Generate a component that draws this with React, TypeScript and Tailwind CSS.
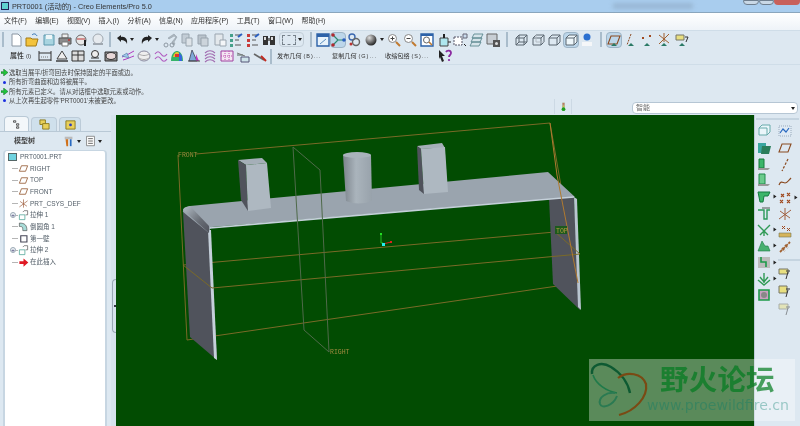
import React from 'react';

const cjk = { fontFamily: '"Liberation Sans", "Noto Sans CJK SC", sans-serif' };

const Ico: React.FC<{ children: React.ReactNode; className?: string }> = ({ children, className = '' }) => (
  <svg viewBox="0 0 16 16" className={`w-[16px] h-[16px] shrink-0 ${className}`}>
    {children}
  </svg>
);

const Arrow = () => <span className="block w-0 h-0 shrink-0 border-x-[2px] border-x-transparent border-t-[3px] border-t-[#222]" />;
const Sep = () => <span className="block w-[2px] h-[15px] shrink-0 bg-[#a9bccb]" />;

const plane = (s = '#8a4a20') => <path d="M5 4h9l-3 8H2z" fill="none" stroke={s} strokeWidth="1.1" />;
const ground = <path d="M8 11l3 3H5z" fill="#2b7a66" />;
const cube = (fill = 'none') => (
  <>
    <path d="M3 6l3-3h8v7l-3 3H3z" fill={fill} stroke="#5b6670" />
    <path d="M3 6h8v7M11 6l3-3" fill="none" stroke="#5b6670" />
  </>
);

const row1a = [
  <><path d="M4 2h6l3 3v9H4z" fill="#fff" stroke="#8a96a2" /></>,
  <><path d="M2 6h5l1 1h6l-2 7H2z" fill="#f3c33b" stroke="#a37a14" /><path d="M8 3c2-2 4-1 5 1" fill="none" stroke="#2a6db0" /></>,
  <><path d="M3 3h10v10H3z" fill="#a8d4e0" stroke="#5d98ad" /><path d="M5 3h6v4H5z" fill="#eef6f8" /></>,
  <><path d="M5 2h6v4H5z" fill="#eee" stroke="#777" /><path d="M2 6h12v6H2z" fill="#8b8b8b" stroke="#555" /><path d="M5 10h6v4H5z" fill="#fff" stroke="#777" /><circle cx="12" cy="8" r="1" fill="#b33" /></>,
  <><circle cx="7" cy="8" r="5" fill="#e8e8e8" stroke="#666" /><path d="M3 7h8" stroke="#b33" /><path d="M11 8v6" stroke="#222" strokeWidth="2" /></>,
  <><circle cx="8" cy="7" r="5" fill="#e6eaee" stroke="#a0a8b0" /><path d="M3 12h10" stroke="#a0a8b0" strokeWidth="2" /></>,
];

const row1b = [
  <><path d="M12 2l-6 4 1 1 5-3 2 1-4 5 1 3 2-1-1-2 3-5z" fill="#aeb8c0" stroke="#8d98a2" strokeWidth=".5" /><circle cx="4" cy="13" r="2" fill="none" stroke="#8d98a2" /><circle cx="10" cy="13" r="2" fill="none" stroke="#8d98a2" /></>,
  <><path d="M3 2h7v9H3z" fill="#c3cdd6" stroke="#99a5af" /><path d="M7 6h6v8H7z" fill="#dde3e8" stroke="#99a5af" /></>,
  <><path d="M3 3h8v9H3z" fill="#b9c3cc" stroke="#98a3ad" /><path d="M6 6h7v8H6z" fill="#ccd4db" stroke="#98a3ad" /></>,
  <><path d="M3 2h8v11H3z" fill="#e3e8ec" stroke="#9aa5af" /><path d="M8 8h6v6H8z" fill="#f4f6f8" stroke="#9aa5af" /></>,
  <><path d="M2 2h3v3H2zM2 7h3v3H2zM2 12h3v3H2z" fill="#45a08a" /><path d="M7 3h6M7 8h4M7 13h6" stroke="#555" /><path d="M10 5l4-3" stroke="#2a5fc0" strokeWidth="2" /></>,
  <><path d="M2 2h3v3H2zM2 7h3v3H2zM2 12h3v3H2z" fill="#c83a3a" /><path d="M7 3h6M7 8h4M7 13h6" stroke="#555" /><path d="M10 5l4-3" stroke="#2a5fc0" strokeWidth="2" /></>,
  <><path d="M2 4h5v9H2zM9 4h5v9H9z" fill="#333" /><path d="M7 6h2v3H7z" fill="#777" /><path d="M3 5h2v3H3zM10 5h2v3h-2z" fill="#ddd" /></>,
];

const row1c = [
  <><path d="M2 2h12v12H2z" fill="#e8f3fb" stroke="#2d62a8" strokeWidth="1.4" /><path d="M2 2h12v3H2z" fill="#2d62a8" /><path d="M5 12l6-5" stroke="#5d8fc0" /></>,
  <><path d="M3 3l5 5-5 5M8 8h6" fill="none" stroke="#2d8a70" strokeWidth="1.2" /><circle cx="3" cy="3" r="1.8" fill="#b02a30" /><circle cx="3" cy="13" r="1.8" fill="#b02a30" /><circle cx="14" cy="8" r="1.8" fill="#2b5fc0" /></>,
  <><circle cx="6" cy="5" r="3" fill="none" stroke="#3a67b0" strokeWidth="1.4" /><circle cx="10" cy="10" r="3.5" fill="none" stroke="#666" strokeWidth="1.4" /><circle cx="5" cy="12" r="1.5" fill="#b33" /></>,
  <><defs><radialGradient id="ball" cx=".35" cy=".3" r=".8"><stop offset="0" stopColor="#ddd" /><stop offset="1" stopColor="#111" /></radialGradient></defs><circle cx="8" cy="8" r="5.5" fill="url(#ball)" /></>,
];

const zoomIn = <><circle cx="6.5" cy="6.5" r="4" fill="#fff" stroke="#888" /><path d="M4.5 6.5h4M6.5 4.5v4" stroke="#444" /><path d="M10 10l4 4" stroke="#c07a30" strokeWidth="2" /></>;
const zoomOut = <><circle cx="6.5" cy="6.5" r="4" fill="#fff" stroke="#888" /><path d="M4.5 6.5h4" stroke="#444" /><path d="M10 10l4 4" stroke="#c07a30" strokeWidth="2" /></>;
const row1d = [
  zoomIn,
  zoomOut,
  <><path d="M2 2h12v12H2z" fill="#fff" stroke="#2d62a8" strokeWidth="1.4" /><path d="M2 2h12v2H2z" fill="#2d62a8" /><circle cx="7.5" cy="8" r="3" fill="none" stroke="#666" /><path d="M10 10l3 3" stroke="#c07a30" strokeWidth="1.6" /></>,
  <><path d="M4 6h8v8H4z" fill="#aee6ee" stroke="#444" /><path d="M8 6V2" stroke="#222" strokeWidth="2" /><path d="M12 10h3" stroke="#222" /></>,
  <><path d="M2 5h8v8H2z" fill="#fff" stroke="#556" strokeDasharray="2 1" /><path d="M11 2h4v4h-4z" fill="#cde" stroke="#667" /><path d="M12 12l2 2" stroke="#222" /></>,
  <><path d="M5 2h9l-2 4H3zM4 6h9l-2 4H2zM3 10h9l-2 4H1z" fill="#d6e4ea" stroke="#4f7d86" strokeWidth=".8" /></>,
  <><path d="M2 2h10v10H2z" fill="#c8ced4" stroke="#666" /><path d="M8 8h7v7H8z" fill="#555" /><circle cx="11.5" cy="11.5" r="1.5" fill="#ddd" /></>,
];

const row1e = [
  <>{cube()}<path d="M6 3v7h8M6 10l-3 3" fill="none" stroke="#5b6670" /></>,
  <>{cube()}<path d="M6 3v7h8" fill="none" stroke="#b4bcc4" /></>,
  <>{cube()}</>,
];

const row2 = [
  <><path d="M2 3v10M14 3v10M2 5h12M2 12h12" fill="none" stroke="#333" /><path d="M4 9h8" stroke="#777" strokeDasharray="1 1" /></>,
  <><path d="M3 11l5-8 5 8z" fill="#eee" stroke="#444" /><path d="M2 13h12" stroke="#333" strokeWidth="1.4" /></>,
  <><path d="M2 3h12v10H2z" fill="#ddd" stroke="#333" /><path d="M2 7h12M8 3v10" stroke="#333" /></>,
  <><circle cx="8" cy="6" r="3.5" fill="#eee" stroke="#333" /><path d="M2 13h12M4 10h8" stroke="#333" strokeWidth="1.2" /></>,
  <><path d="M2 4h12v9H2z" fill="#888" stroke="#333" /><ellipse cx="8" cy="8" rx="5" ry="3.5" fill="#e8d8d8" stroke="#333" /></>,
  <><path d="M2 9c4-1 8-4 12-6M3 12c4-1 8-3 11-4" fill="none" stroke="#b03ac0" /><path d="M2 8l5-3 2 5z" fill="#9dc8e8" stroke="#5377a8" strokeWidth=".6" /></>,
  <><ellipse cx="8" cy="8" rx="6" ry="5" fill="#eee" stroke="#8a8aa0" /><path d="M3 6c3 2 7 2 10 0M3 10c3 2 7 2 10 0" fill="none" stroke="#aaa" /></>,
  <><path d="M2 6c2-3 4-3 6 0s4 3 6 0M2 11c2-3 4-3 6 0s4 3 6 0" fill="none" stroke="#b05ac0" strokeWidth="1.2" /></>,
  <><path d="M2 13c0-8 4-10 6-10s6 2 6 10z" fill="#36b36a" /><path d="M4 9c1-4 3-5 4-5s3 1 4 5z" fill="#e8c22a" /><path d="M6 6h4v3H6z" fill="#d33" /><path d="M10 4l3 4v5h-3z" fill="#3366dd" /></>,
  <><path d="M6 2l5 11H3z" fill="#7fa8d8" stroke="#334" strokeWidth=".7" /><path d="M10 6l3 7h-3z" fill="#c03ac0" /><path d="M2 13h12" stroke="#444" /></>,
  <><path d="M3 5c3-3 7-3 10 0M3 8c3-3 7-3 10 0M3 11c3-3 7-3 10 0M3 14c3-3 7-3 10 0" fill="none" stroke="#a06ab0" strokeWidth="1.1" /></>,
  <><path d="M2 3h12v10H2z" fill="#f3e6f2" stroke="#a040a0" /><path d="M2 8h12M6 3v10M10 3v10" stroke="#c050b0" strokeDasharray="1 1" /></>,
  <><path d="M2 6h6v2H2z" fill="#9aa" /><path d="M6 9h8v5H6z" fill="#cfe4ea" stroke="#557" /><path d="M2 5l8 3" stroke="#777" /></>,
  <><path d="M2 6l10 6" stroke="#666" strokeWidth="1.6" /><path d="M9 8l5 5" stroke="#c02a20" strokeWidth="2" /></>,
];

const right1 = [
  [<><path d="M6 2h8v7l-3 3H3V5z" fill="#eaf6fa" stroke="#6aa" /><path d="M3 5h8v7" fill="none" stroke="#6aa" /></>, 131, false],
  [<><path d="M2 3h8v10H2z" fill="#3aa6a0" /><path d="M6 6h9l-2 8H5z" fill="#2a7d5a" /></>, 148, false],
  [<><path d="M3 3h5v9H3z" fill="#3bb56a" stroke="#167a3a" /><path d="M2 12h12l-2 2H2z" fill="#999" /></>, 165, false],
  [<><path d="M3 2h6v10H3z" fill="#6acb8c" stroke="#1e8a4a" /><path d="M2 12h12l-2 2H2z" fill="#999" /></>, 182, false],
  [<><path d="M2 3h12l-2 4H8l-1 6H4z" fill="#3bb56a" stroke="#147a40" /></>, 197, true],
  [<><path d="M2 5h6v9h3V5h3" fill="none" stroke="#2a9a5a" strokeWidth="1.4" /><path d="M6 3h8" stroke="#555" /></>, 213, false],
  [<><path d="M2 3l6 6 6-6M8 9v5M4 13l4-4 4 4" fill="none" stroke="#2f9a55" strokeWidth="1.4" /></>, 230, true],
  [<><path d="M2 13h12l-2-5H9L6 3 4 8z" fill="#48b070" stroke="#1d7a45" strokeWidth=".6" /></>, 247, true],
  [<><path d="M2 3h12v11H2z" fill="#bbb" /><path d="M5 3v5h5v5" fill="none" stroke="#1d9a4a" strokeWidth="1.6" /></>, 263, true],
  [<><path d="M8 2v10M4 6l4 5 4-5M2 9l6 5 6-5" fill="none" stroke="#2f9a55" strokeWidth="1.4" /></>, 280, true],
  [<><path d="M3 3h10v10H3z" fill="#c8a0c0" stroke="#1d9a4a" strokeWidth="1.6" /><circle cx="8" cy="8" r="3" fill="#888" /></>, 295, false],
] as const;

const right2: { icon: React.ReactNode; gap: string }[] = [
  { icon: <><path d="M2 3h12v10H2z" fill="#dfeaf4" stroke="#9ab" strokeDasharray="1 1" /><path d="M3 10l3-4 3 3 3-4" fill="none" stroke="#2a6ac0" strokeWidth="1.2" /></>, gap: 'mt-0' },
  { icon: plane(), gap: 'mt-[1px]' },
  { icon: <path d="M11 2L5 14" stroke="#8a4a20" strokeWidth="1.2" strokeDasharray="2.5 1.5" />, gap: 'mt-[1px]' },
  { icon: <path d="M2 11c2-5 4-2 6-2s4-3 6-5" fill="none" stroke="#8a4a20" strokeWidth="1.2" />, gap: 'mt-0' },
  { icon: <path d="M4 4l3 3M7 4L4 7M10 3l3 3M13 3l-3 3M3 10l3 3M6 10l-3 3M10 10l3 3M13 10l-3 3" stroke="#a04a20" strokeWidth="1.1" />, gap: 'mt-0' },
  { icon: <path d="M8 2v12M2 13L14 4M3 5l10 7" stroke="#a06040" strokeWidth="1" />, gap: 'mt-0' },
  { icon: <><path d="M2 10h12v4H2z" fill="#d6b45a" stroke="#775" strokeWidth=".6" /><path d="M5 3l3 3M8 3L5 6M10 5l3 3M13 5l-3 3" stroke="#a04a20" /></>, gap: 'mt-[1px]' },
  { icon: <path d="M3 13l10-10M5 9l3 3M8 6l3 3" stroke="#a06030" strokeWidth="1.8" strokeDasharray="3 1" />, gap: 'mt-0' },
];

const datumIcon = (d: string) => (
  <>
    <path d={d} fill="#e8df80" stroke="#776" />
    <path d="M11 7L9 14" stroke="#333" />
    <path d="M9 6h4" stroke="#333" />
  </>
);

const TreeLine: React.FC<{ label: string; plus?: boolean; icon: React.ReactNode }> = ({ label, plus, icon }) => (
  <div className="flex items-center h-[11.7px] pl-[5px]">
    {plus ? (
      <span className="w-[6px] h-[6px] shrink-0 rounded-sm border border-[#9aa8b4] bg-[#eef3f7] text-[6px] leading-[4px] text-center text-[#336]">+</span>
    ) : (
      <span className="w-[6px] h-px ml-[1px] shrink-0" />
    )}
    <span className={`h-px bg-[#b5b5b5] shrink-0 ${plus ? 'w-[2px]' : 'w-[1px] -ml-[5px] pl-[6px]'}`} />
    <svg viewBox="0 0 16 16" className="w-[11px] h-[11px] shrink-0">{icon}</svg>
    <span className="ml-[1px] text-[6.5px] text-[#55606a] whitespace-nowrap">{label}</span>
  </div>
);

const App: React.FC = () => {
  return (
    <div className="relative w-[800px] h-[426px] overflow-hidden flex flex-col bg-[#dde8f1] blur-[0.35px]" style={cjk}>
      {/* title bar */}
      <div className="h-[13px] shrink-0 bg-[#a9cdee] border-b border-[#8aa6bd] flex items-center pl-[1px]">
        <span className="w-[8px] h-[8px] bg-[#5fd0d0] border border-[#225] shrink-0" />
        <span className="ml-[3px] text-[7.3px] leading-[9px] text-[#333] whitespace-nowrap">PRT0001 (活动的) - Creo Elements/Pro 5.0</span>
        <div className="ml-auto flex self-start items-start">
          <span className="w-[80px] h-[6px] mt-[3px] mr-[50px] bg-[#8fa9c4] opacity-60 blur-[2px]" />
          <span className="w-[16px] h-[5px] bg-[#c9d8e6] border border-[#6f7f8f] rounded-b-sm" />
          <span className="w-[15px] h-[5px] bg-[#c9d8e6] border border-[#6f7f8f] rounded-b-sm" />
          <span className="w-[26px] h-[5px] bg-[#c8605a] rounded-b-sm" />
        </div>
      </div>

      {/* menu bar */}
      <div className="h-[17px] shrink-0 bg-gradient-to-b from-[#ffffff] to-[#eef3f8] flex items-center gap-[8.3px] pl-[4px] text-[7px] text-[#333] whitespace-nowrap">
        {['文件(F)', '编辑(E)', '视图(V)', '插入(I)', '分析(A)', '信息(N)', '应用程序(P)', '工具(T)', '窗口(W)', '帮助(H)'].map((m) => (
          <span key={m}>{m}</span>
        ))}
      </div>

      {/* toolbar row 1 */}
      <div className="h-[18px] shrink-0 flex items-center border-t border-[#cfdde8] pl-[2px]">
        <Sep />
        <div className="flex ml-[4px]">
          {row1a.map((ic, i) => <Ico key={i} className="mr-[0.4px]">{ic}</Ico>)}
        </div>
        <span className="ml-[3px]"><Sep /></span>
        <Ico className="ml-[3px]"><path d="M3 6l4-3v2c4-1 7 2 6 7-1-3-3-4-6-4v2z" fill="#222" /></Ico>
        <Arrow />
        <Ico className="ml-[5px] -scale-x-100"><path d="M3 6l4-3v2c4-1 7 2 6 7-1-3-3-4-6-4v2z" fill="#222" /></Ico>
        <Arrow />
        <div className="flex ml-[3px]">
          {row1b.map((ic, i) => <Ico key={i} className="mr-[0.5px]">{ic}</Ico>)}
        </div>
        <div className="ml-[1px] w-[25px] h-[15px] flex items-center border border-[#c2ced8] rounded-sm">
          <span className="ml-[2px] w-[14px] h-[10px] border border-dashed border-[#77828c]" />
          <span className="ml-auto mr-[1px]"><Arrow /></span>
        </div>
        <span className="ml-[6px]"><Sep /></span>
        <Ico className="ml-[3px]">{row1c[0]}</Ico>
        <span className="bg-[#bcd6ea] border border-[#9db4c6] rounded-sm ml-[-1px] w-[16px] h-[16px] flex shrink-0 items-center justify-center">
          <Ico>{row1c[1]}</Ico>
        </span>
        <Ico className="ml-[0.5px]">{row1c[2]}</Ico>
        <Ico className="ml-[0.5px]">{row1c[3]}</Ico>
        <span className="ml-[1px]"><Arrow /></span>
        <div className="flex ml-[2px]">
          {row1d.map((ic, i) => <Ico key={i} className="mr-[0.6px]">{ic}</Ico>)}
        </div>
        <span className="ml-[4px]"><Sep /></span>
        <div className="flex ml-[5px]">
          {row1e.map((ic, i) => <Ico key={i} className="mr-[0.5px]">{ic}</Ico>)}
        </div>
        <span className="bg-[#bcd6ea] border border-[#9db4c6] rounded-sm w-[16px] h-[16px] flex shrink-0 items-center justify-center">
          <Ico>{cube('#eef7fb')}</Ico>
        </span>
        <Ico className="ml-[0.5px]"><circle cx="8" cy="5" r="3.5" fill="#2a6fd0" /><path d="M3 10h10v4H3z" fill="#f5f7f9" /></Ico>
        <span className="ml-[5px]"><Sep /></span>
        <span className="ml-[4px] bg-[#bcd6ea] border border-[#9db4c6] rounded-sm w-[16px] h-[16px] flex shrink-0 items-center justify-center">
          <Ico>{plane()}{ground}</Ico>
        </span>
        <Ico className="ml-[0.5px]"><path d="M8 2L4 13" stroke="#8a4a20" strokeDasharray="2 1" />{ground}</Ico>
        <Ico className="ml-[0.5px]"><path d="M3 5l2 2M5 5L3 7M10 3l2 2M12 3l-2 2" stroke="#a04a20" />{ground}</Ico>
        <Ico className="ml-[0.5px]"><path d="M3 3l10 8M13 2L3 12M8 1v9" stroke="#a06030" />{ground}</Ico>
        <Ico className="ml-[2px]"><path d="M2 3h8v5H2z" fill="#e8df80" stroke="#776" /><path d="M11 5h3l-2 5" fill="none" stroke="#333" />{ground}</Ico>
      </div>

      {/* toolbar row 2 */}
      <div className="h-[17px] shrink-0 flex items-center pl-[10px] border-b border-[#cfdde8] text-[#333] whitespace-nowrap">
        <span className="w-[25px] text-[7px] font-medium">属性 <span className="text-[5.5px]">(I)</span></span>
        <div className="flex ml-[2px]">
          {row2.map((ic, i) => <Ico key={i} className="mr-[0.5px]">{ic}</Ico>)}
        </div>
        <span className="ml-[2px]"><Sep /></span>
        <div className="ml-[5px] flex gap-[5px] text-[6.2px]">
          <span className="w-[50px]">发布几何 <span className="text-[5.5px] tracking-[1px]">(B)...</span></span>
          <span className="w-[48px]">复制几何 <span className="text-[5.5px] tracking-[1px]">(G)...</span></span>
          <span className="w-[49px]">收缩包络 <span className="text-[5.5px] tracking-[1px]">(S)...</span></span>
        </div>
        <Ico className="ml-[3px]">
          <path d="M2 2l6 6H5l2 5-2 1-2-5-1 2z" fill="#222" />
          <path d="M9 4c1-2 5-2 5 1 0 2-2 2-2 4" fill="none" stroke="#8a2aa0" strokeWidth="1.8" />
          <circle cx="12" cy="12" r="1.1" fill="#8a2aa0" />
        </Ico>
      </div>

      {/* message area */}
      <div className="h-[50px] shrink-0 flex">
        <div className="pl-[1px] pt-[3px] text-[6.3px] text-[#444] flex-1">
          {[
            ['g', '选取当展平/折弯回去时保持固定的平面或边。'],
            ['b', '所有折弯曲面和边将被展平。'],
            ['g', '所有元素已定义。请从对话框中选取元素或动作。'],
            ['b', "从上次再生起零件'PRT0001'未被更改。"],
          ].map(([k, t]) => (
            <div key={t} className="flex items-center h-[9.4px] whitespace-nowrap">
              <span className="w-[7px] flex justify-center shrink-0">
                {k === 'g' ? (
                  <svg viewBox="0 0 8 8" className="w-[7px] h-[7px]"><path d="M0 3h3V0l5 4-5 4V5H0z" fill="#1fc43a" stroke="#0b5a1a" strokeWidth=".5" /></svg>
                ) : (
                  <span className="w-[3px] h-[3px] rounded-full bg-[#1a2ee0]" />
                )}
              </span>
              <span className="ml-[1px]">{t}</span>
            </div>
          ))}
        </div>
        <div className="flex items-end pb-[1px]">
          <div className="w-[18px] h-[15px] border-x border-[#ccd9e4] flex items-center justify-center">
            <svg viewBox="0 0 8 14" className="w-[5px] h-[12px]">
              <path d="M2 0h4v8H2z" fill="#a8a87a" />
              <circle cx="4" cy="2" r="1.3" fill="#c86a6a" />
              <circle cx="4" cy="6" r="1.3" fill="#d8c050" />
              <circle cx="4" cy="10.5" r="3" fill="#1fa01f" />
            </svg>
          </div>
          <div className="ml-[60px] mr-[2px] w-[166px] h-[12px] bg-white border border-[#b6c6d4] rounded-sm flex items-center pl-[3px] text-[7px] text-[#666]">
            智能
            <span className="ml-auto mr-[2px]"><Arrow /></span>
          </div>
        </div>
      </div>

      {/* body */}
      <div className="flex-1 flex min-h-0">
        {/* model tree panel */}
        <div className="w-[111px] shrink-0 flex flex-col">
          <div className="h-[16px] shrink-0 flex items-end pl-[4px] gap-[2px]">
            <span className="w-[25px] h-[15px] bg-[#f3f7fa] border border-b-0 border-[#b9c9d6] rounded-t flex items-center justify-center">
              <svg viewBox="0 0 12 12" className="w-[9px] h-[9px]"><path d="M2 1h3v2H2zM6 5h3v2H6zM6 9h3v2H6z" fill="none" stroke="#333" /></svg>
            </span>
            <span className="w-[26px] h-[14px] bg-[#cfe0ec] border border-b-0 border-[#bccbd8] rounded-t flex items-center justify-center">
              <svg viewBox="0 0 12 12" className="w-[11px] h-[11px]"><path d="M1 1h6v5H1z" fill="#e8d05a" stroke="#8a7a20" /><path d="M4 5h7v6H4z" fill="#e8d05a" stroke="#8a7a20" /></svg>
            </span>
            <span className="w-[22px] h-[14px] bg-[#cfe0ec] border border-b-0 border-[#bccbd8] rounded-t flex items-center justify-center">
              <svg viewBox="0 0 12 12" className="w-[11px] h-[11px]"><path d="M1 2h10v9H1z" fill="#e8d05a" stroke="#8a7a20" /><circle cx="6" cy="6.5" r="1.5" fill="#2a3ac0" /></svg>
            </span>
          </div>
          <div className="h-[19px] shrink-0 flex items-center border-t border-[#b9c9d6]">
            <span className="ml-[14px] w-[24px] text-[7px] font-bold text-[#444] whitespace-nowrap">模型树</span>
            <svg viewBox="0 0 14 14" className="ml-[25px] w-[12px] h-[12px]"><path d="M2 2h9v3H2z" fill="#bbb" /><path d="M3 5l1 8h2V5z" fill="#d0701a" /><path d="M9 5v8" stroke="#2a6ac0" strokeWidth="2" /></svg>
            <span className="ml-[2px]"><Arrow /></span>
            <svg viewBox="0 0 14 14" className="ml-[4px] w-[11px] h-[12px]"><path d="M2 1h10v12H2z" fill="#fff" stroke="#777" /><path d="M4 4h6M4 7h6M4 10h6" stroke="#444" /></svg>
            <span className="ml-[2px]"><Arrow /></span>
          </div>
          <div className="flex-1 ml-[3px] mr-[4px] bg-white border-x-2 border-t border-[#c7d6e2] rounded-t-sm">
            <div className="flex items-center h-[11.7px] pl-[3px]">
              <span className="w-[9px] h-[8px] bg-[#6fd3e0] border border-[#566] shrink-0" />
              <span className="ml-[3px] text-[6.5px] text-[#55606a]">PRT0001.PRT</span>
            </div>
            <TreeLine label="RIGHT" icon={plane()} />
            <TreeLine label="TOP" icon={plane()} />
            <TreeLine label="FRONT" icon={plane()} />
            <TreeLine label="PRT_CSYS_DEF" icon={<path d="M8 2v12M2 13L14 4M3 5l10 7" stroke="#a06040" />} />
            <TreeLine plus label="拉伸 1" icon={<><path d="M2 7h8v7H2z" fill="#fff" stroke="#3a9a8a" /><path d="M7 3l2-2h5v6h-3" fill="none" stroke="#555" /></>} />
            <TreeLine label="倒圆角 1" icon={<><path d="M2 3c8 0 11 3 11 11H7C7 8 6 8 2 8z" fill="#a8dcd8" stroke="#555" /></>} />
            <TreeLine label="第一壁" icon={<path d="M4 4h9v9H4z" fill="#fff" stroke="#445" strokeWidth="1.6" />} />
            <TreeLine plus label="拉伸 2" icon={<><path d="M2 7h8v7H2z" fill="#fff" stroke="#3a9a8a" /><path d="M7 3l2-2h5v6h-3" fill="none" stroke="#555" /></>} />
            <TreeLine label="在此插入" icon={<path d="M2 6h6V2l7 6-7 6v-4H2z" fill="#e01a24" />} />
          </div>
        </div>

        {/* sash */}
        <div className="w-[5px] shrink-0 flex flex-col items-start pt-[164px] bg-[#d6e3ed]">
          <div className="w-[4px] h-[54px] ml-[1px] border border-r-0 border-[#9aa8b6] rounded-l-sm flex items-center justify-center">
            <span className="w-[2px] h-[2px] bg-[#334]" />
          </div>
        </div>

        {/* graphics window */}
        <div className="flex-1 bg-[#024c02]">
          <svg viewBox="116 115 638 311" className="w-full h-full block">
            <defs>
              <linearGradient id="cyl" x1="0" x2="1" y1="0" y2="0">
                <stop offset="0" stopColor="#7c848c" />
                <stop offset=".45" stopColor="#aab4bc" />
                <stop offset="1" stopColor="#98a2ab" />
              </linearGradient>
              <linearGradient id="bend" x1="0" x2="1" y1="0" y2="1">
                <stop offset="0" stopColor="#b5bfc8" />
                <stop offset=".6" stopColor="#676c74" />
                <stop offset="1" stopColor="#50535c" />
              </linearGradient>
            </defs>

            {/* back half of datum planes */}
            <g fill="none" stroke="#7a6a28" strokeWidth="1">
              <path d="M196 154L550 123L578 283" />
              <path d="M178 155L187 340L578 283" />
              <path d="M183 265L555 232" />
            </g>

            {/* left wall */}
            <path d="M183 212L210 230L217 360L190 337Z" fill="#50535c" />
            <path d="M208 230L211 230L217 360L214 358Z" fill="#c5d0da" />
            {/* right wall */}
            <path d="M549 198L574 197L580 310L553 284Z" fill="#50535c" />
            <path d="M574 197L577 199L581 310L578 307Z" fill="#b9c5d0" />

            {/* top flange */}
            <path d="M190 206L548 172L575 197L212 227Q209 229 209 233L183 212Q182 208 190 206Z" fill="#9aa4ae" />
            <path d="M183 210Q183 207 190 206L209 226L209 233Z" fill="url(#bend)" />
            <path d="M210 228L574 197" fill="none" stroke="#c5d0da" strokeWidth="1.6" />

            {/* left boss */}
            <path d="M238 160L262 158L267 163L246 165Z" fill="#a5afb8" />
            <path d="M238 160L246 165L248 211L241 200Z" fill="#50535c" />
            <path d="M246 165L267 163L271 208L248 211Z" fill="#aeb8c1" />

            {/* cylinder */}
            <path d="M343 155L346 201Q358 206 372 201L371 155Z" fill="url(#cyl)" />
            <ellipse cx="357" cy="155" rx="14" ry="3" fill="#a9b3bb" />

            {/* right boss */}
            <path d="M417 146L442 143L445 148L421 149Z" fill="#a5afb8" />
            <path d="M417 146L421 149L424 194L419 190Z" fill="#50535c" />
            <path d="M421 149L445 147L448 192L424 194Z" fill="#aeb8c1" />

            {/* front lines over the part */}
            <g fill="none" stroke="#7a6a28" strokeWidth="1">
              <path d="M183 265L212 288L580 254L555 232" />
            </g>
            <path d="M550 123L557 175" stroke="#b07a30" fill="none" />
            <path d="M557 175L578 283" stroke="#b07a30" fill="none" />
            <g fill="none" stroke="#4f6a4a" strokeWidth="1">
              <path d="M293 147L320 170L329 352L304 330Z" />
            </g>

            {/* csys */}
            <path d="M381 234V243H383" fill="none" stroke="#22c022" />
            <path d="M383 244L391 242" stroke="#d02020" />
            <rect x="380" y="233" width="2" height="2" fill="#22e022" />
            <rect x="382" y="243" width="3" height="3" fill="#2ee" />
            <rect x="390" y="241" width="2" height="2" fill="#e02020" />

            <g fontSize="6.5" fill="#a08a40" fontFamily="Liberation Mono, monospace">
              <text x="178" y="157">FRONT</text>
              <text x="330" y="354">RIGHT</text>
            </g>
            <rect x="555" y="226" width="12" height="8" fill="#1d5a1d" />
            <text x="556" y="232.5" fontSize="6.5" fill="#b09a40" fontFamily="Liberation Mono, monospace">TOP</text>
          </svg>
        </div>

        {/* right toolbar */}
        <div className="w-[46px] shrink-0 flex flex-col pt-[3px] border-l border-[#bccbd8]">
          <div className="h-[2px] shrink-0 mx-[1px] bg-[#c5d4e0]" />
          <div className="flex pt-[3px]">
            <div className="w-[23px] shrink-0 flex flex-col pl-[1px]">
              {right1.map(([ic, y, arrow]) => (
                <div key={y} className="flex items-center h-[16.4px]">
                  <Ico>{ic}</Ico>
                  {arrow ? <span className="ml-[1px] -rotate-90"><Arrow /></span> : null}
                </div>
              ))}
            </div>
            <div className="w-[23px] shrink-0 flex flex-col">
              {right2.map((r, i) => (
                <div key={i} className={`flex items-center h-[16.2px] ${r.gap}`}>
                  <Ico className="ml-[-1px]">{r.icon}</Ico>
                  {i === 4 ? <span className="ml-[1px] -rotate-90"><Arrow /></span> : null}
                </div>
              ))}
              <div className="h-[2px] my-[3px] bg-[#c5d4e0]" />
              <Ico className="ml-[-1px] mt-[1px]">{datumIcon('M2 4h9v5H2z')}</Ico>
              <Ico className="ml-[-1px] mt-[2px]">{datumIcon('M2 3h8v7H2z')}</Ico>
              <Ico className="ml-[-1px] mt-[2px] opacity-50">{datumIcon('M2 3h9v5H2z')}</Ico>
            </div>
          </div>
        </div>
      </div>

      {/* watermark */}
      <div className="absolute left-[589px] top-[359px] w-[206px] h-[62px] bg-white/35 flex">
        <svg viewBox="0 0 60 62" className="w-[60px] h-[62px] shrink-0">
          <path d="M3 15C2 6 12 2 22 8C32 14 39 24 41 34" fill="none" stroke="#0d5a32" strokeWidth="2.4" />
          <path d="M4 16C7 25 17 32 28 34" fill="none" stroke="#1f7a4a" strokeWidth="1.6" />
          <path d="M29 19C38 12 53 14 57 25C59 38 46 52 30 56" fill="none" stroke="#7a4a14" strokeWidth="2.2" />
          <path d="M26 34C18 33 9 38 11 45C13 50 24 47 28 37" fill="none" stroke="#2a7a52" strokeWidth="2" />
        </svg>
        <div className="flex flex-col min-w-0">
          <span className="ml-[11px] h-[36px] text-[28.5px] leading-[38px] font-bold tracking-[0.2px] text-[#007a1e]/70 whitespace-nowrap" style={{ fontFamily: '"Noto Sans CJK SC", sans-serif' }}>
            野火论坛
          </span>
          <span className="-ml-[2px] mt-[2px] text-[14.1px] leading-[16px] text-[#007a6a]/35 whitespace-nowrap" style={{ fontFamily: '"DejaVu Sans", sans-serif' }}>
            www.proewildfire.cn
          </span>
        </div>
      </div>
    </div>
  );
};

export default App;
